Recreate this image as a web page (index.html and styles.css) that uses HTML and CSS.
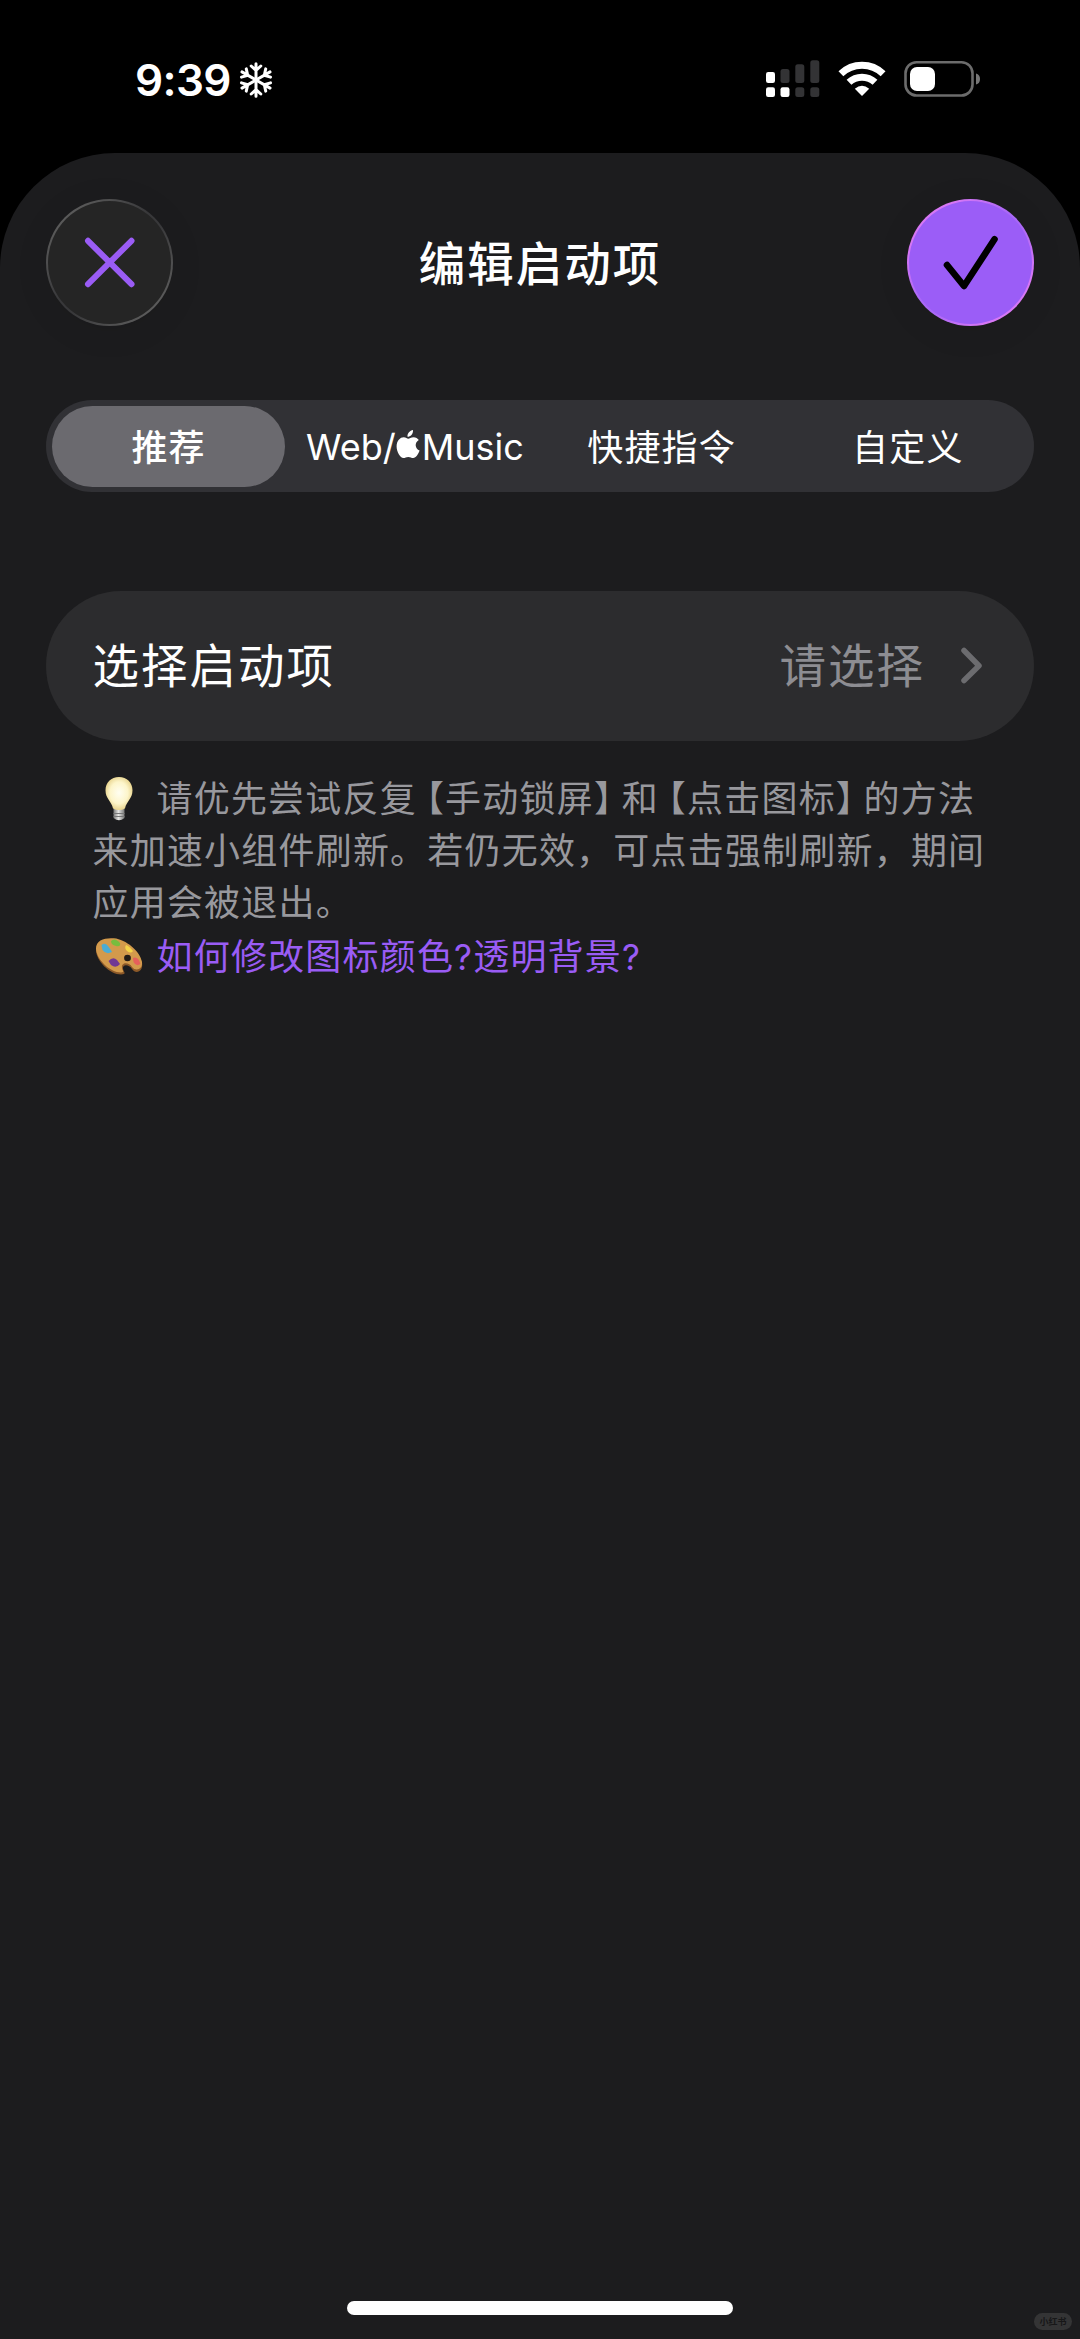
FILE: index.html
```html
<!DOCTYPE html>
<html lang="zh-CN">
<head>
<meta charset="utf-8">
<title>编辑启动项</title>
<link rel="stylesheet" href="styles.css">
</head>
<body>
<div class="status">
  <span class="time">9:39</span>
  <svg class="snow" width="36" height="40" viewBox="-18 -20 36 40">
    <defs><path id="arm" d="M0 0V-16.200M-4.800 -14L0 -9.600L4.800 -14"/></defs>
    <g fill="none" stroke="#fff" stroke-width="3" stroke-linecap="round" stroke-linejoin="round">
      <use href="#arm"/><use href="#arm" transform="rotate(60)"/><use href="#arm" transform="rotate(120)"/><use href="#arm" transform="rotate(180)"/><use href="#arm" transform="rotate(240)"/><use href="#arm" transform="rotate(300)"/>
    </g>
  </svg>
  <svg class="signal" width="54" height="38" viewBox="0 0 54 38">
    <g fill="#fff"><rect x="0" y="12" width="9" height="11" rx="2.200"/><rect x="0" y="27.300" width="9" height="9.700" rx="2.200"/><rect x="14.500" y="27.300" width="9" height="9.700" rx="2.200"/></g>
    <g fill="#333335"><rect x="14.500" y="9" width="9" height="14" rx="2.500"/><rect x="29.300" y="4.300" width="9" height="18.700" rx="2.500"/><rect x="44.300" y="0.300" width="9" height="22.700" rx="2.500"/><rect x="29.300" y="27.300" width="9" height="9.700" rx="2.500"/><rect x="44.300" y="27.300" width="9" height="9.700" rx="2.500"/></g>
  </svg>
  <svg class="wifi" width="48" height="36" viewBox="0 0 48 36">
    <g fill="none" stroke="#fff" stroke-width="7"><path d="M2.900 12.700A30.500 30.500 0 0 1 45.100 12.700"/><path d="M11 21.300A19 19 0 0 1 37 21.300"/></g>
    <path d="M24 35L16.800 27.800Q24 21.800 31.200 27.800Z" fill="#fff"/>
  </svg>
  <svg class="battery" width="78" height="38" viewBox="0 0 78 38">
    <rect x="1.500" y="2.200" width="67" height="33.300" rx="11" fill="none" stroke="#6c6c6c" stroke-width="2.600"/>
    <rect x="6" y="7" width="25" height="24" rx="7" fill="#fff"/>
    <path d="M72 13.500Q76 14.500 76 19T72 24.500Z" fill="#777"/>
  </svg>
</div>
<main class="sheet">
  <header class="header">
    <button class="round close" aria-label="关闭"><svg width="124" height="124" viewBox="0 0 124 124"><path d="M40 39.800L83.500 83.200M83.500 39.800L40 83.200" stroke="#9a5cf5" stroke-width="6" stroke-linecap="round"/></svg></button>
    <h1 class="title">编辑启动项</h1>
    <button class="round done" aria-label="完成"><svg width="124" height="124" viewBox="0 0 124 124"><path d="M38 64L55 85L85.500 38.300" fill="none" stroke="#000" stroke-width="6.600" stroke-linecap="round" stroke-linejoin="round"/></svg></button>
  </header>
  <nav class="segments">
    <span class="segment selected">推荐</span>
    <span class="segment latin">Web/<svg class="apple" width="24" height="29" viewBox="0 0 24 29"><path d="M17 0C17.300 4 14.500 6.800 11.500 6.800C11.200 3.300 14 .6 17 0ZM12.200 8.800C13.500 8.800 15 7.200 17.600 7.200C19.800 7.200 21.700 8.300 22.800 10C18.200 12.700 18.900 18.600 23.600 20.600C22.500 24 20 28 17.200 28C15.300 28 14.600 26.900 12.300 26.900C10 26.900 9.200 28 7.400 28C4.300 28 .6 21.900 .6 16.500C.6 10.700 4.200 7.300 7.700 7.300C9.900 7.300 11.200 8.800 12.200 8.800Z" fill="#fff"/></svg>Music</span>
    <span class="segment">快捷指令</span>
    <span class="segment">自定义</span>
  </nav>
  <section class="row">
    <span class="label">选择启动项</span>
    <span class="value">请选择</span>
    <svg class="chevron" width="24" height="38" viewBox="0 0 24 38"><path d="M4 3.500L19 18.700L4 33.500" fill="none" stroke="#6c6c6f" stroke-width="5.500" stroke-linecap="round" stroke-linejoin="round"/></svg>
  </section>
  <section class="notes">
    <p class="line"><svg class="emoji bulb" width="64" height="48" viewBox="0 0 64 48">
      <defs><radialGradient id="glow" cx=".5" cy=".48" r=".6"><stop offset="0" stop-color="#fffef1"/><stop offset=".55" stop-color="#fdf5ca"/><stop offset="1" stop-color="#dfc675"/></radialGradient><linearGradient id="cap"><stop offset="0" stop-color="#777"/><stop offset=".45" stop-color="#e6e6e4"/><stop offset="1" stop-color="#777"/></linearGradient></defs>
      <path d="M20.500 35V44Q26 48.500 31.500 44V35Z" fill="url(#cap)"/><path d="M20.500 39.500H31.500M20.500 42.500H31.500" stroke="#777" stroke-width="1"/>
      <path d="M26 3C18 3 12.500 8.800 12.500 16.300C12.500 25 18.500 27 20 34.500Q26 37.500 32 34.500C33.500 27 39.500 25 39.500 16.300C39.500 8.800 34 3 26 3Z" fill="url(#glow)"/>
    </svg>请优先尝试反复<span class="open">【</span>手动锁屏<span class="shut">】</span>和<span class="open">【</span>点击图标<span class="shut">】</span>的方法</p>
    <p class="line">来加速小组件刷新。若仍无效，可点击强制刷新，期间</p>
    <p class="line">应用会被退出。</p>
    <p class="line link"><svg class="emoji" width="64" height="48" viewBox="0 0 64 48">
      <path d="M3 17C3 8 12 5.500 21 6.300C33 7.500 47 19 49 30C50.500 38 43 42 39 36C36 31 29 31 30 36C31 40 34 41 28 41.500C17 41.500 3 28 3 17Z" fill="#8c5928"/>
      <path d="M3 15.500C3 7 12 4.500 21 5.300C33 6.500 47 18 49 29C50 36 43 39 39 34C36 29 28 29 29 35C29.500 38 32 39 28 39.500C17 39.500 3 26 3 15.500Z" fill="#d39a4c"/>
      <ellipse cx="34.500" cy="25" rx="3.400" ry="3.200" fill="#231c17"/>
      <path d="M8.500 12Q12 9 15 13T19 19Q13 22 9.500 17Z" fill="#4bacd5"/>
      <path d="M18 8Q22 4 27 10Q28 14 23 13Q18 12 18 8Z" fill="#77bd3e"/>
      <path d="M33 12Q36 13 40 18Q38 21 34 18Q31 15 33 12Z" fill="#f4d447"/>
      <path d="M40 25Q45 23 47.500 31Q43 34 40.500 29Z" fill="#e6605b"/>
      <path d="M15.500 28Q20 23 24 27L27 31Q23 36 18 32Z" fill="#713894"/>
    </svg>如何修改图标颜色<span class="ask">?</span>透明背景<span class="ask">?</span></p>
  </section>
  <footer class="foot"><div class="home"></div></footer>
</main>
<span class="mark">小红书</span>
</body>
</html>
```
FILE: styles.css
```css
* { box-sizing: border-box; }
body {
  margin: 0;
  width: 1080px;
  height: 2339px;
  overflow: hidden;
  position: relative;
  display: flex;
  flex-direction: column;
  background: #000;
  color: #fff;
  font-family: Inter, "Noto Sans CJK SC", sans-serif;
}
svg { display: block; flex: none; }
.status {
  height: 153px;
  padding: 0 98px 0 135px;
  display: flex;
  align-items: flex-start;
}
.time {
  width: 103px;
  margin-top: 53px;
  font-size: 44px;
  line-height: 54px;
  font-weight: 600;
  letter-spacing: -.6px;
}
.snow { margin-top: 60px; }
.signal { margin: 60px 0 0 auto; }
.wifi { margin: 61px 0 0 18px; }
.battery { margin: 60px 0 0 18px; }
.sheet {
  flex: 1;
  min-height: 0;
  padding: 46px 46px 0;
  border-radius: 115px 115px 0 0;
  background: #1c1c1e;
  display: flex;
  flex-direction: column;
}
.header {
  height: 127px;
  display: flex;
  justify-content: space-between;
  align-items: center;
}
.round {
  width: 127px;
  height: 127px;
  padding: 0;
  border: 2px solid transparent;
  border-radius: 50%;
  display: grid;
  place-items: center;
}
.close {
  background: linear-gradient(#252525, #252525) padding-box, linear-gradient(135deg, #5a5a5a 15%, #38383a 45%, #38383a 55%, #5a5a5a 85%) border-box;
  box-shadow: 0 5px 35px rgba(0,0,0,.08);
}
.done {
  background: linear-gradient(#9b5df7, #9b5df7) padding-box, linear-gradient(135deg, #d777f5 20%, #aa68f7 45%, #aa68f7 55%, #d777f5 80%) border-box;
  box-shadow: 0 5px 35px rgba(0,0,0,.08);
}
.title {
  margin: 2px 0 0;
  font-size: 46.5px;
  line-height: 60px;
  font-weight: 500;
  letter-spacing: 2px;
}
.segments {
  height: 92px;
  margin-top: 74px;
  padding: 6px 3px 5px 0;
  border-radius: 46px;
  background: #313135;
  display: grid;
  grid-template-columns: repeat(4, minmax(0, 1fr));
}
.segment {
  display: flex;
  align-items: center;
  justify-content: center;
  padding-top: 2px;
  font-size: 36px;
  line-height: 48px;
  letter-spacing: 1.2px;
}
.selected {
  margin: 0 7px 0 6px;
  border-radius: 41px;
  background: #6b6a6f;
  font-weight: 500;
}
.latin { padding: 0 1px 0 0; letter-spacing: 0; }
.apple { margin: -4px 2px 0 0; }
.row {
  height: 150px;
  margin-top: 99px;
  padding: 0 50px 0 46.5px;
  border-radius: 75px;
  background: #2c2c2e;
  display: flex;
  align-items: center;
  font-size: 46.5px;
  line-height: 60px;
  letter-spacing: 2px;
}
.value { margin-left: auto; color: #8d8d92; }
.chevron { margin-left: 35px; }
.notes {
  margin-top: 32px;
  padding-left: 46.5px;
  color: #98989d;
  font-size: 36px;
  letter-spacing: 1.2px;
}
.line {
  height: 52px;
  margin: 0;
  display: flex;
  align-items: center;
  white-space: nowrap;
  line-height: 52px;
}
.bulb { margin-bottom: 3px; }
.link { margin-top: 2px; color: #9a5cf5; }
.open, .shut { font-feature-settings: "halt"; }
.open { margin-left: 9px; }
.shut { margin-right: 8.5px; }
.ask { font-size: 35px; }
.foot { margin-top: auto; height: 38px; display: flex; justify-content: center; }
.home { width: 386px; height: 14px; border-radius: 7px; background: #fff; }
.mark {
  position: absolute;
  left: 1034px;
  top: 2313px;
  width: 38px;
  height: 17px;
  border-radius: 9px;
  background: #343435;
  color: #171718;
  font-size: 9px;
  font-weight: 700;
  line-height: 17px;
  text-align: center;
}
```
